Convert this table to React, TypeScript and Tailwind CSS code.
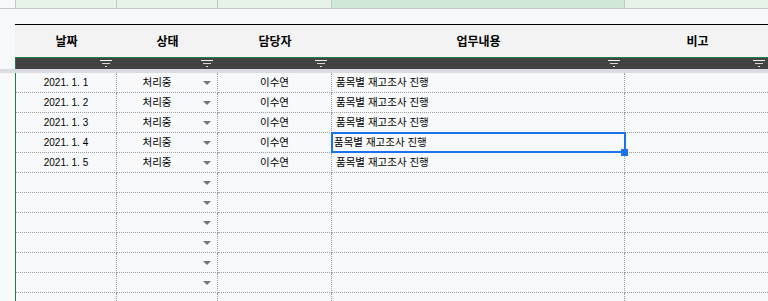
import React from "react";

type Col = { w: string; top: string; header: string };

const COLS: Col[] = [
  { w: "w-[101px]", top: "bg-[#e6f3e8]", header: "날짜" },
  { w: "w-[101px]", top: "bg-[#e6f3e8]", header: "상태" },
  { w: "w-[114px]", top: "bg-[#e6f3e8]", header: "담당자" },
  { w: "w-[293px]", top: "bg-[#cfe8d7]", header: "업무내용" },
  { w: "w-[145px]", top: "bg-[#e6f3e8]", header: "비고" },
];

const ROWS: { date: string; status: string; owner: string; task: string }[] = [
  { date: "2021. 1. 1", status: "처리중", owner: "이수연", task: "품목별 재고조사 진행" },
  { date: "2021. 1. 2", status: "처리중", owner: "이수연", task: "품목별 재고조사 진행" },
  { date: "2021. 1. 3", status: "처리중", owner: "이수연", task: "품목별 재고조사 진행" },
  { date: "2021. 1. 4", status: "처리중", owner: "이수연", task: "품목별 재고조사 진행" },
  { date: "2021. 1. 5", status: "처리중", owner: "이수연", task: "품목별 재고조사 진행" },
  ...Array.from({ length: 7 }, () => ({ date: "", status: "", owner: "", task: "" })),
];

function FilterIcon() {
  return (
    <svg width="12" height="7" viewBox="0 0 12 7" className="block">
      <rect x="0" y="0" width="12" height="1" fill="#f2f2f2" />
      <rect x="2" y="3" width="8" height="1" fill="#d9d9d9" />
      <rect x="5" y="6" width="2" height="1" fill="#d9d9d9" />
    </svg>
  );
}

function DropArrow() {
  return (
    <svg width="8" height="4" viewBox="0 0 8 4" className="block">
      <polygon points="0,0 8,0 4,4" fill="#757575" />
    </svg>
  );
}

export default function App() {
  return (
    <div
      className="w-[768px] h-[301px] overflow-hidden bg-[#f8f9fa] flex flex-col text-black"
      style={{ fontFamily: '"Liberation Sans", "Noto Sans CJK KR", sans-serif' }}
    >
      {/* column letter strip */}
      <div className="flex h-[9px] shrink-0 border-b border-[#c4c7c5]">
        <div className="w-[16px] shrink-0 border-r border-[#c4c7c5] bg-[#f8f9fa]" />
        {COLS.map((c, i) => (
          <div key={i} className={`${c.w} shrink-0 border-r border-[#c4c7c5] ${c.top}`} />
        ))}
      </div>

      {/* blank row above the table */}
      <div className="h-[15px] shrink-0" />

      {/* table top rule */}
      <div className="flex h-[1px] shrink-0">
        <div className="w-[15px] shrink-0" />
        <div className="flex-1 bg-black" />
      </div>

      {/* header row */}
      <div className="flex h-[32px] shrink-0">
        <div className="w-[15px] shrink-0" />
        <div className="w-[1px] shrink-0 bg-[#f3f3f3]" />
        {COLS.map((c, i) => (
          <div
            key={i}
            className={`${c.w} shrink-0 bg-[#f3f3f3] flex items-center justify-center text-[12px] font-bold`}
            style={{ fontFamily: '"Noto Sans CJK KR", sans-serif' }}
          >
            {c.header}
          </div>
        ))}
      </div>

      {/* header bottom rule */}
      <div className="flex h-[1px] shrink-0">
        <div className="w-[15px] shrink-0" />
        <div className="flex-1 bg-[#1e7e45]" />
      </div>

      {/* filter bar */}
      <div className="flex h-[11px] shrink-0">
        <div className="w-[15px] shrink-0" />
        <div className="w-[1px] shrink-0 bg-[#1e7e45]" />
        {COLS.map((c, i) => (
          <div key={i} className={`${c.w} shrink-0 bg-[#434343] flex items-center justify-end pr-[5px]`}>
            <FilterIcon />
          </div>
        ))}
      </div>

      {/* frozen rows divider */}
      <div className="h-[4px] shrink-0 bg-[#dadce0]" />

      {/* body rows */}
      {ROWS.map((r, ri) => {
        const selected = ri === 3;
        return (
          <div key={ri} className="flex h-[20px] shrink-0">
            <div className="w-[15px] shrink-0" />
            <div className="w-[1px] shrink-0 bg-[#1e7e45]" />
            <div className="w-[101px] shrink-0 border-r border-b border-dotted border-[#9e9e9e] flex items-center justify-center text-[10px]">
              {r.date}
            </div>
            <div className="w-[101px] shrink-0 border-r border-b border-dotted border-[#9e9e9e] flex items-center pr-[6px]">
              <span className="flex-1 text-center text-[10.5px] pr-[6px]">{r.status}</span>
              <DropArrow />
            </div>
            <div className="w-[114px] shrink-0 border-r border-b border-dotted border-[#9e9e9e] flex items-center justify-center text-[10.5px]">
              {r.owner}
            </div>
            <div
              className={`relative w-[293px] shrink-0 border-r border-b border-dotted border-[#9e9e9e] flex items-center text-[10.5px] ${
                selected ? "pl-[2px]" : "pl-[4px]"
              }`}
            >
              {r.task}
              {selected && (
                <div className="absolute left-[-1px] top-[-1px] w-[295px] h-[21px] border-2 border-[#1a73e8] z-10">
                  <div className="absolute left-[288px] top-[15px] w-[7px] h-[7px] bg-[#1a73e8]" />
                </div>
              )}
            </div>
            <div className="w-[145px] shrink-0 border-r border-b border-dotted border-[#9e9e9e]" />
          </div>
        );
      })}
    </div>
  );
}
